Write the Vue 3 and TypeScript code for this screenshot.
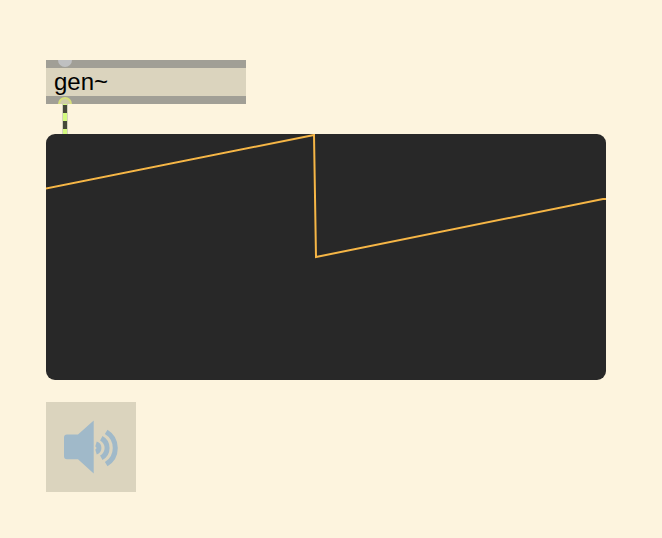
<script setup lang="ts">
import { computed, ref } from 'vue'

interface Sample {
  x: number
  y: number
}

const audioOn = ref(false)

const samples: Sample[] = [
  { x: -2, y: 55 },
  { x: 268, y: 1 },
  { x: 270, y: 123 },
  { x: 557, y: 65 },
  { x: 562, y: 65 },
]

const trace = computed(() => samples.map((s) => `${s.x},${s.y}`).join(' '))
</script>

<template>
  <main class="patcher">
    <div class="object">
      <div class="rail"><span class="inlet"></span></div>
      <div class="label">gen~</div>
      <div class="rail bottom"><span class="outlet"></span></div>
    </div>

    <svg class="cord" viewBox="0 0 6 30" aria-hidden="true">
      <rect width="6" height="30" fill="#d3d0be" />
      <rect x="1" width="4" height="30" fill="#d3fa80" />
      <rect x="1" y="1" width="4" height="8" fill="#45483a" />
      <rect x="1" y="17" width="4" height="8" fill="#45483a" />
    </svg>

    <section class="scope" aria-label="Signal scope">
      <svg viewBox="0 0 560 246" preserveAspectRatio="none" aria-hidden="true">
        <polyline :points="trace" />
      </svg>
    </section>

    <button
      class="dac"
      type="button"
      aria-label="Audio output"
      :aria-pressed="audioOn"
      @click="audioOn = !audioOn"
    >
      <svg viewBox="0 0 90 90" aria-hidden="true">
        <path
          class="cone"
          d="M21 32.5H32L47.7 18.5V71.5L32 57.3H21A3 3 0 0 1 18 54.3V35.5A3 3 0 0 1 21 32.5Z"
        />
        <path class="wave" d="M60.2 29.8A19 19 0 0 1 60.2 62.2" />
        <path class="wave" d="M55.3 36.2A11.2 11.2 0 0 1 55.3 55.8" />
        <path class="wave" d="M50 42A4.2 4.2 0 0 1 50 50" />
      </svg>
    </button>
  </main>
</template>

<style>
body {
  margin: 0;
  background: #fdf4de;
}
</style>

<style scoped>
.patcher {
  display: flex;
  flex-direction: column;
  align-items: flex-start;
  padding: 60px 56px 46px 46px;
  font-family: "Liberation Sans", Arial, sans-serif;
}

.object {
  width: 200px;
  background: #dbd4be;
}

.rail {
  display: flex;
  height: 8px;
  padding-left: 12px;
  overflow: hidden;
  background: #a19f96;
}

.rail.bottom {
  align-items: flex-end;
}

.inlet,
.outlet {
  box-sizing: border-box;
  flex: none;
  width: 14px;
  height: 7px;
}

.inlet {
  border-radius: 0 0 7px 7px;
  background: #bfc0c1;
}

.outlet {
  border: 2px solid #d8e07c;
  border-bottom: 0;
  border-radius: 7px 7px 0 0;
  background: #d0cca9;
}

.label {
  padding: 0 8px;
  color: #000;
  font-size: 24px;
  line-height: 28px;
}

.cord {
  display: block;
  width: 6px;
  height: 30px;
  margin-left: 16px;
}

.scope {
  align-self: stretch;
  overflow: hidden;
  border-radius: 9px;
  background: #282828;
}

.scope svg {
  display: block;
  width: 100%;
  height: 246px;
}

.scope polyline {
  fill: none;
  stroke: #f6b646;
  stroke-width: 2px;
  stroke-linejoin: miter;
  vector-effect: non-scaling-stroke;
}

.dac {
  width: 90px;
  height: 90px;
  margin-top: 22px;
  padding: 0;
  border: 0;
  background: #dbd4be;
  cursor: pointer;
}

.dac svg {
  display: block;
}

.cone {
  fill: #a0b9c9;
}

.wave {
  fill: none;
  stroke: #a0b9c9;
  stroke-width: 5px;
}
</style>
